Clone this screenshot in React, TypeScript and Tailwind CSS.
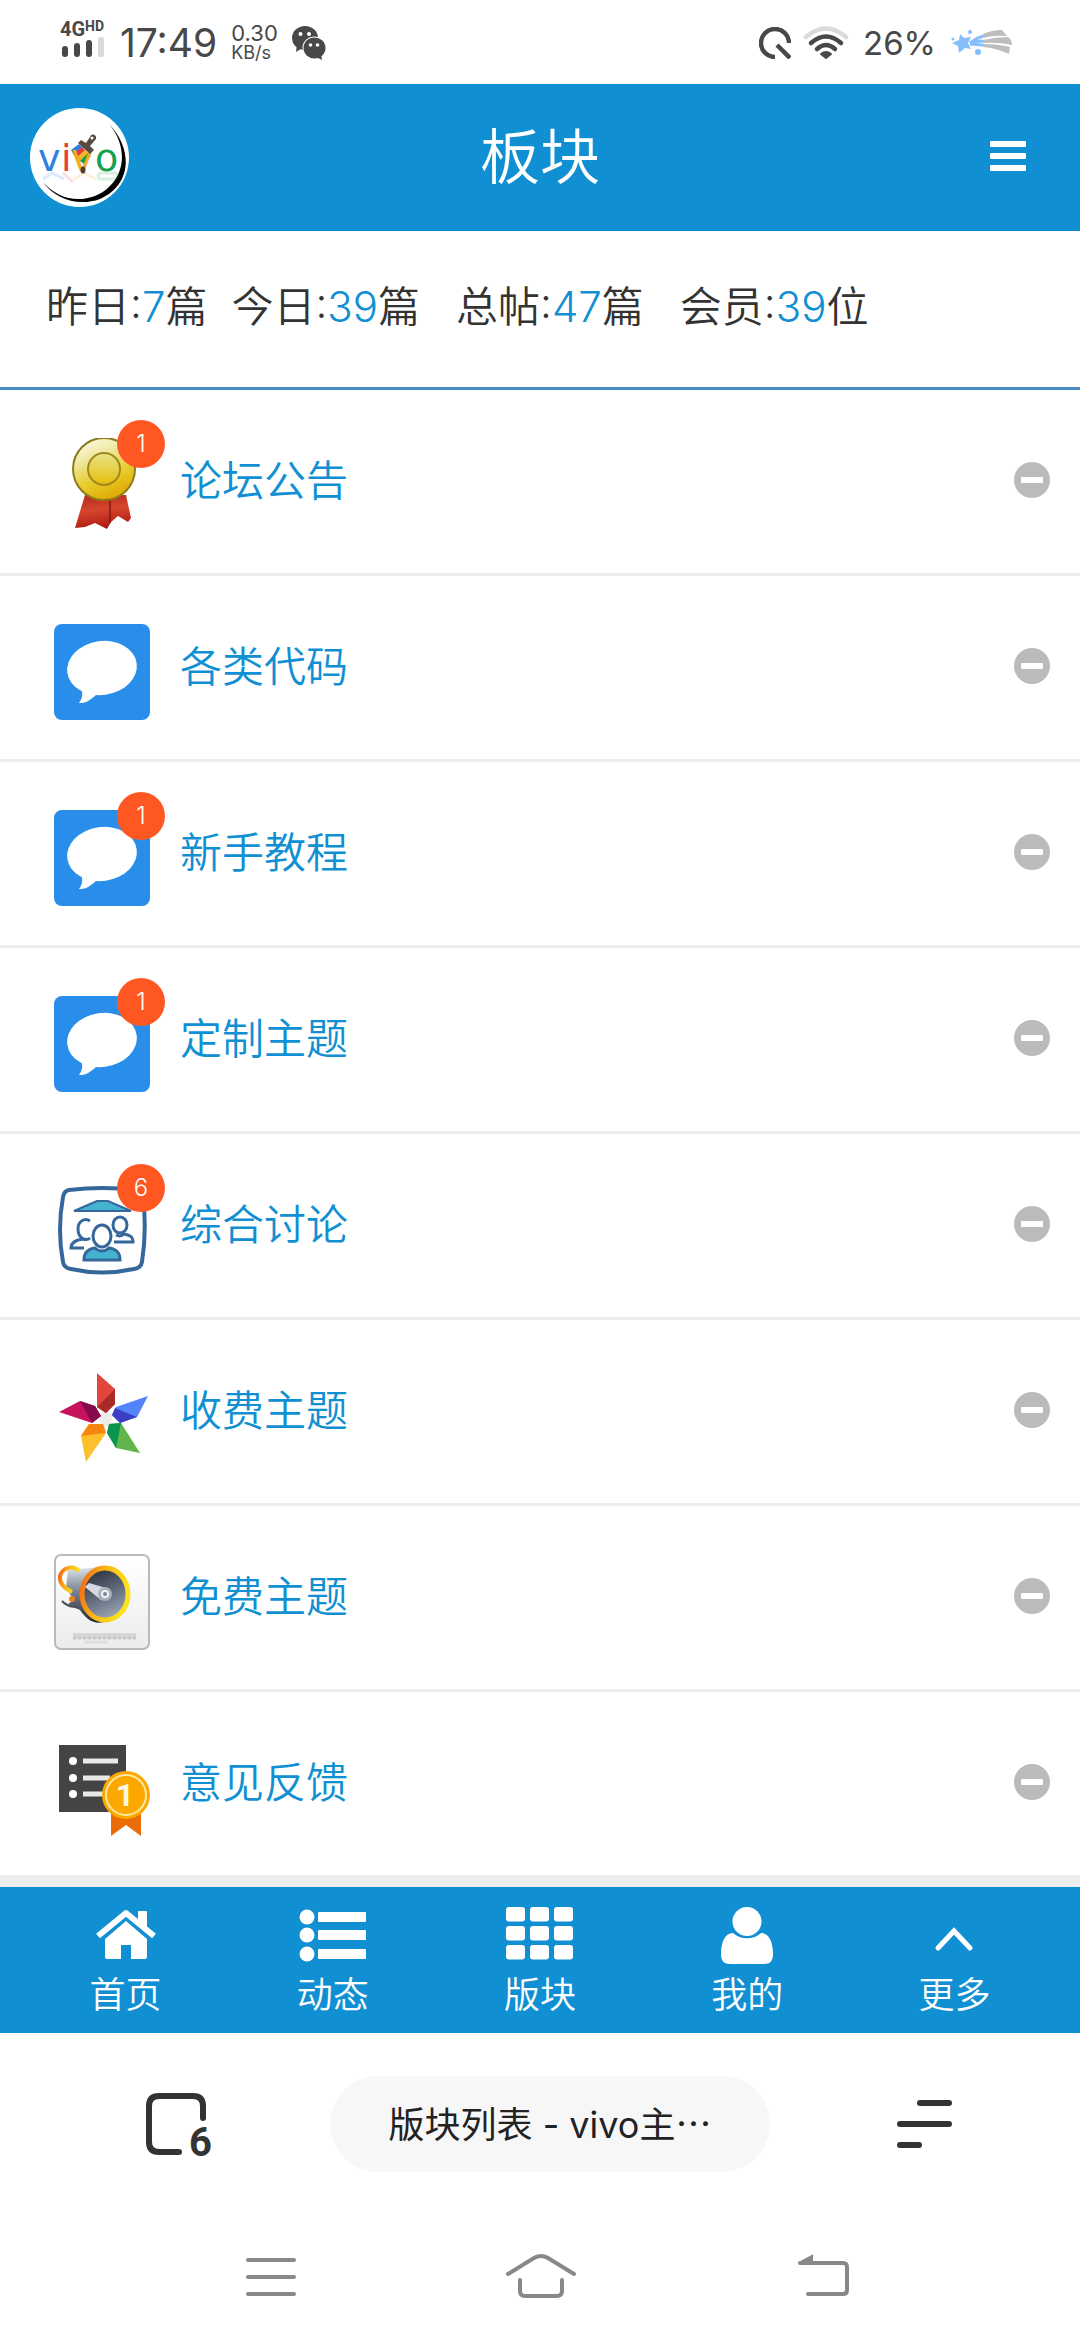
import { useState } from "react"
import type { ReactNode } from "react"

function MedalIcon() {
  return (
    <svg viewBox="0 0 96 96" className="h-24 w-24" aria-hidden="true">
      <defs>
        <linearGradient id="medal-gold" x1="0.2" y1="0" x2="0.6" y2="1">
          <stop offset="0" stopColor="#fbfae8" />
          <stop offset="0.3" stopColor="#efe9a0" />
          <stop offset="0.65" stopColor="#e8cc2c" />
          <stop offset="1" stopColor="#dfa800" />
        </linearGradient>
        <linearGradient id="medal-core" x1="0" y1="0" x2="0" y2="1">
          <stop offset="0" stopColor="#e9e48a" />
          <stop offset="1" stopColor="#e6bd08" />
        </linearGradient>
        <linearGradient id="medal-ribbon" x1="0" y1="0" x2="0.2" y2="1">
          <stop offset="0" stopColor="#b5281c" />
          <stop offset="0.5" stopColor="#d5462c" />
          <stop offset="1" stopColor="#b01c14" />
        </linearGradient>
      </defs>
      <path d="M31 57 L21 90 L31 89 L41 85 L53 91 L57 84 L64 78 L74 84 L77 80 L72 57 Z" fill="url(#medal-ribbon)" />
      <path d="M56 60 L56 85" stroke="#9a1a14" strokeWidth="2" />
      <circle cx="50" cy="31" r="31" fill="url(#medal-gold)" stroke="#8c7a1c" strokeWidth="2" />
      <circle cx="50" cy="31" r="16" fill="url(#medal-core)" stroke="#a08a1e" strokeWidth="2" />
    </svg>
  )
}

function ChatIcon() {
  return (
    <svg viewBox="0 0 96 96" className="h-24 w-24" aria-hidden="true">
      <rect width="96" height="96" rx="8" fill="#298ee9" />
      <ellipse cx="48" cy="44" rx="35" ry="27" transform="rotate(-8 48 44)" fill="#fff" />
      <path d="M24 62 C29 66 30 72 25 79 C33 80 38 74 42 71 L50 70 Z" fill="#fff" />
    </svg>
  )
}

function ForumIcon() {
  return (
    <svg viewBox="0 0 96 96" className="h-24 w-24" fill="none" stroke="#36679b" strokeWidth="3" aria-hidden="true">
      <path
        d="M15 8 Q48 4 82 8 Q88 9 89 15 Q93 48 88 80 Q87 86 80 87 Q48 94 17 87 Q10 86 9 80 Q3 48 9 15 Q10 9 15 8 Z"
        strokeWidth="4"
      />
      <path d="M20 29 L43 19 H54 L77 29 Z" fill="#43b3cf" strokeWidth="2" />
      <path d="M36 39 C30 35 24 40 24 47 C24 52 26 55 29 57 C22 58 17 61 17 66 H30" />
      <path d="M29 57 C32 58 34 58 36 56" />
      <ellipse cx="66" cy="43" rx="7" ry="8" />
      <path d="M60 60 H79 C79 54 75 53 70 52 C67 55 64 54 62 53" />
      <ellipse cx="48" cy="54" rx="9" ry="11" fill="#fff" />
      <path d="M30 78 C30 70 34 67 41 66 C45 70 51 70 55 66 C62 67 66 70 66 78 Z" fill="#43b3cf" />
    </svg>
  )
}

function PinwheelIcon() {
  return (
    <svg viewBox="0 0 96 96" className="h-24 w-24" aria-hidden="true">
      <path d="M52 42 L60 47 L56 57 L50 60 L45 54 L47 46 Z" fill="#ececec" />
      <path d="M43 5 L61 21 V36 L52 45 L43 39 Z" fill="#e0463b" />
      <path d="M61 21 V36 L52 45 L43 39 Z" fill="#a92a26" />
      <path d="M94 28 L83 49 L66 55 L58 47 L62 39 Z" fill="#5384fb" />
      <path d="M83 49 L66 55 L58 47 L61 40 Z" fill="#3a3fc4" />
      <path d="M86 85 L62 80 L53 65 L55 56 L67 55 Z" fill="#62b54a" />
      <path d="M62 80 L53 65 L55 56 L67 55 Z" fill="#0b9350" />
      <path d="M32 94 L27 68 L35 56 H49 L52 65 Z" fill="#fdc02a" />
      <path d="M27 68 L35 56 H49 L52 65 Z" fill="#f6860f" />
      <path d="M5 44 L26 33 L41 38 L47 48 L38 55 Z" fill="#c8125f" />
      <path d="M26 33 L41 38 L47 48 L38 55 Z" fill="#850b4b" />
    </svg>
  )
}

function SpeakerIcon() {
  return (
    <svg viewBox="0 0 96 96" className="h-24 w-24" aria-hidden="true">
      <defs>
        <linearGradient id="speaker-plate" x1="0" y1="0" x2="0" y2="1">
          <stop offset="0" stopColor="#ffffff" />
          <stop offset="1" stopColor="#ebecee" />
        </linearGradient>
        <linearGradient id="speaker-ring" x1="0" y1="0" x2="1" y2="0.3">
          <stop offset="0" stopColor="#f0641a" />
          <stop offset="0.45" stopColor="#f9b414" />
          <stop offset="1" stopColor="#fbe21e" />
        </linearGradient>
        <linearGradient id="speaker-cone" x1="0.3" y1="0" x2="0.7" y2="1">
          <stop offset="0" stopColor="#2b3039" />
          <stop offset="0.5" stopColor="#616b7c" />
          <stop offset="1" stopColor="#a3abb8" />
        </linearGradient>
        <linearGradient id="speaker-tube" x1="0" y1="0" x2="0" y2="1">
          <stop offset="0" stopColor="#dfe3ea" />
          <stop offset="0.45" stopColor="#76808f" />
          <stop offset="1" stopColor="#23272e" />
        </linearGradient>
      </defs>
      <rect x="1" y="1" width="94" height="94" rx="6" fill="url(#speaker-plate)" stroke="#b9b9b9" strokeWidth="2" />
      <path d="M14 16 L46 13 L50 68 C40 71 32 65 26 56 L14 50 L20 46 L12 34 Z" fill="url(#speaker-tube)" />
      <path d="M8 47 C14 54 20 52 24 54" fill="none" stroke="#4a4f58" strokeWidth="2" />
      <path d="M25 17 C19 11 9 13 6 22 C5 29 10 34 18 38" fill="none" stroke="url(#speaker-ring)" strokeWidth="4" />
      <circle cx="18" cy="45" r="3" fill="#f0801c" />
      <ellipse cx="51" cy="40" rx="23" ry="26" fill="url(#speaker-cone)" stroke="url(#speaker-ring)" strokeWidth="5" />
      <path d="M31 33 L35 29 L52 34 L54 45 L47 46 Z" fill="#d5d9e0" />
      <circle cx="51" cy="40" r="7" fill="#aab1bd" />
      <circle cx="51" cy="40" r="4" fill="#eef0f3" />
      <circle cx="51" cy="40" r="2" fill="#7d8694" />
      <path d="M19 82 H82" stroke="#d6d7d9" strokeWidth="6" />
      <path d="M19 84 H82" stroke="#c6c7c9" strokeWidth="3" strokeDasharray="3 2" />
      <path d="M30 88 H54" stroke="#dddee0" strokeWidth="3" />
    </svg>
  )
}

function FeedbackIcon() {
  return (
    <svg viewBox="0 0 96 96" className="h-24 w-24" aria-hidden="true">
      <rect x="5" y="5" width="67" height="67" fill="#444" />
      <g fill="#fff">
        <circle cx="19" cy="21" r="4" />
        <circle cx="19" cy="38" r="4" />
        <circle cx="19" cy="54" r="4" />
      </g>
      <path d="M29 21 H64 M29 38 H56 M29 54 H50" stroke="#e9e9e9" strokeWidth="5" />
      <path d="M57 72 H87 V96 L72 85 L57 96 Z" fill="#ea6c06" />
      <circle cx="72" cy="55" r="24" fill="#fca800" />
      <circle cx="72" cy="55" r="20" fill="none" stroke="#ffe9a6" strokeWidth="2" />
      <text x="71" y="66" textAnchor="middle" fontSize="32" fontWeight="700" fontFamily="Roboto, sans-serif" fill="#fff8df">
        1
      </text>
    </svg>
  )
}

function SiteLogo() {
  return (
    <svg viewBox="0 0 99 99" className="size-[99px]" role="img" aria-label="vivo">
      <circle cx="49.5" cy="49.5" r="49.5" fill="#fff" />
      <path d="M79 16 C104 42 101 78 70 91 C48 99 25 91 13 74 C27 90 46 95 65 88 C94 76 101 42 79 16 Z" fill="#000" />
      {/* mirrored tint under the word */}
      <g fill="none" strokeWidth="3" opacity="0.16">
        <path d="M13 71 L22 65 L34 71" stroke="#2f7fe0" />
        <path d="M33 65 L43 74" stroke="#e53d38" />
        <path d="M44 71 L54 65 L66 71" stroke="#f4a91f" />
        <rect x="68" y="65" width="20" height="6" rx="3" stroke="#14a050" />
      </g>
      {/* brush bristles sit behind the second v */}
      <path d="M49 36 L41 42 L44 47 L53 40 Z" fill="#2f7fe0" />
      <path d="M52 39 L43 46 L47 51 L56 43 Z" fill="#e53d38" />
      <path d="M55 42 L46 50 L50 54 L59 46 Z" fill="#f4b32a" />
      <path d="M58 45 L50 53 L54 56 L61 48 Z" fill="#14a050" />
      <g fontFamily="'DejaVu Sans', sans-serif" fontSize="38">
        <text x="8" y="63" fill="#2f7fe0">v</text>
        <text x="31" y="63" fill="#e53d38">i</text>
        <text x="41" y="63" fill="#f4a91f">v</text>
        <text x="65" y="63" fill="#14a050">o</text>
      </g>
      <path
        d="M48 35 L51 32 L56 35 L60 29 C61 25 67 26 66 31 L60 38 L64 42 L60 46 Z"
        fill="#594a42"
      />
      <circle cx="62" cy="30" r="1.5" fill="#fff" />
      <ellipse cx="53" cy="62" rx="2.5" ry="3.5" fill="#4a4038" />
    </svg>
  )
}

type Board = {
  title: string
  icon: ReactNode
  count?: number
}

const boards: Board[] = [
  { title: "论坛公告", icon: <MedalIcon />, count: 1 },
  { title: "各类代码", icon: <ChatIcon /> },
  { title: "新手教程", icon: <ChatIcon />, count: 1 },
  { title: "定制主题", icon: <ChatIcon />, count: 1 },
  { title: "综合讨论", icon: <ForumIcon />, count: 6 },
  { title: "收费主题", icon: <PinwheelIcon /> },
  { title: "免费主题", icon: <SpeakerIcon /> },
  { title: "意见反馈", icon: <FeedbackIcon /> },
]

const tabs = [
  {
    label: "首页",
    icon: (
      <>
        <path d="M6 29 L34 6 L62 29" fill="none" stroke="#fff" strokeWidth="6" strokeLinejoin="round" />
        <path d="M46 5 Q46 4 47 4 H54 Q55 4 55 5 V24 L46 17 Z" />
        <path d="M34 14 L55 32 V50 Q55 52 53 52 H39 V38 H29 V52 H15 Q13 52 13 50 V32 Z" />
      </>
    ),
  },
  {
    label: "动态",
    icon: (
      <>
        <circle cx="8" cy="10" r="7.5" />
        <circle cx="8" cy="28" r="7.5" />
        <circle cx="8" cy="47" r="7.5" />
        <rect x="19" y="5" width="48" height="10" rx="1" />
        <rect x="19" y="23" width="48" height="10" rx="1" />
        <rect x="19" y="42" width="48" height="10" rx="1" />
      </>
    ),
  },
  {
    label: "版块",
    icon: (
      <>
        {[0, 19, 38].map((y) =>
          [0, 24, 48].map((x) => <rect key={`${x}-${y}`} x={x} y={y} width="19" height="14.5" rx="3" />),
        )}
      </>
    ),
  },
  {
    label: "我的",
    icon: (
      <>
        <circle cx="34" cy="14.5" r="14.5" />
        <path d="M20 26 C27 33 41 33 48 26 C56 26 60 35 60 47 C60 54 57 57 51 57 H17 C11 57 8 54 8 47 C8 35 12 26 20 26 Z" />
      </>
    ),
  },
  {
    label: "更多",
    icon: <path d="M18 41 L34 24 L50 41" fill="none" stroke="#fff" strokeWidth="5" strokeLinecap="round" />,
  },
]

function StatusBar() {
  return (
    <div className="flex h-[84px] items-center justify-between pt-[2px] pr-[66px] pl-[60px] text-[#484848]">
      <div className="flex items-center">
        <div className="flex w-12 flex-col pb-2">
          <div className="flex items-start font-[Roboto,sans-serif] font-bold">
            <span className="text-[20px] leading-[16px]">4G</span>
            <span className="text-[14px] leading-[10px]">HD</span>
          </div>
          <svg viewBox="0 0 48 20" className="h-5 w-12" aria-hidden="true">
            <rect x="2" y="9" width="6" height="11" rx="3" fill="#484848" />
            <rect x="14" y="6" width="6" height="14" rx="3" fill="#484848" />
            <rect x="26" y="3" width="6" height="17" rx="3" fill="#484848" />
            <rect x="38" y="0" width="6" height="20" rx="2" fill="#dadada" />
          </svg>
        </div>
        <span className="ml-3 text-[39px] leading-[48px]">17:49</span>
        <span className="ml-[14px] flex flex-col">
          <span className="text-[22px] leading-[20px]">0.30</span>
          <span className="text-[18px] leading-[20px]">KB/s</span>
        </span>
        <svg viewBox="0 0 34 34" className="ml-[14px] size-[34px]" fill="#484848" aria-hidden="true">
          <path d="M5 18 L4 26 L10 22 Z" />
          <ellipse cx="13" cy="12" rx="13" ry="12" />
          <ellipse cx="22.5" cy="22" rx="12" ry="11.5" fill="#fff" />
          <ellipse cx="22.5" cy="22" rx="11" ry="10.5" />
          <path d="M24 31 L30 34 L29 28 Z" />
          <g fill="#fff">
            <circle cx="8.5" cy="8" r="2" />
            <circle cx="17" cy="8" r="2" />
            <circle cx="18.5" cy="19" r="1.8" />
            <circle cx="25.5" cy="19" r="1.8" />
          </g>
        </svg>
      </div>
      <div className="flex items-center">
        <svg viewBox="0 0 32 32" className="size-8" fill="none" stroke="#484848" strokeWidth="4.5" aria-hidden="true">
          <path d="M30 16 A14 14 0 1 0 16 30" />
          <path d="M18 18 L31 31" />
        </svg>
        <svg viewBox="0 0 46 34" className="ml-3 h-[34px] w-[46px]" fill="none" stroke="#484848" strokeWidth="4.5" strokeLinecap="round" aria-hidden="true">
          <path d="M3 11 Q23 -6 43 11" stroke="#dadada" />
          <path d="M8 17 Q23 4 38 17" />
          <path d="M14 23 Q23 15 32 23" />
          <path d="M18 28 Q23 24 28 28 L23 32 Z" fill="#484848" strokeWidth="2" strokeLinejoin="round" />
        </svg>
        <span className="ml-[14px] text-[33px] leading-[48px]">26%</span>
        <svg viewBox="0 0 64 28" className="ml-[14px] h-7 w-16" aria-hidden="true">
          <g fill="#bdbdbd">
            <path d="M33 5 Q42 1 52 1 L57 7 Q44 6 33 9 Z" />
            <path d="M33 11 Q46 8 58 8 Q62 11 62 16 Q48 13 33 14 Z" />
            <path d="M33 15 Q48 15 60 18 L59 25 Q46 19 33 18 Z" />
          </g>
          <g fill="none" stroke="#86bdfc" strokeWidth="3">
            <path d="M20 14 Q26 9 33 7" />
            <path d="M20 14 Q26 12 33 12" />
            <path d="M20 15 L33 16" />
          </g>
          <path d="M10 5 L14 9 L21 8 L18 14 L21 20 L15 19 L9 24 L8 17 L2 14 L9 11 Z" fill="#86bdfc" />
          <circle cx="20" cy="3" r="2" fill="#86bdfc" />
          <circle cx="28" cy="23" r="3" fill="#86bdfc" />
          <circle cx="3" cy="10" r="1.5" fill="#86bdfc" />
        </svg>
      </div>
    </div>
  )
}

function Stat({ label, value, unit }: { label: string; value: number; unit: string }) {
  return (
    <span>
      {label}:<span className="text-[#1090d3]">{value}</span>
      {unit}
    </span>
  )
}

function BoardRow({ board }: { board: Board }) {
  const [open, setOpen] = useState(true)

  return (
    <li className="flex items-center justify-between border-b-[3px] border-[#eee] bg-white py-[39px] pr-[30px] pl-[54px]">
      <a href="#" className="flex items-center gap-[30px]">
        <span className="relative pt-[9px]">
          {board.icon}
          {board.count && (
            <span className="absolute -top-[9px] left-[63px] flex size-12 items-center justify-center rounded-full bg-[#ff5722] text-[24px] text-white">
              {board.count}
            </span>
          )}
        </span>
        <span className="pb-[2px] text-[42px] leading-[60px] text-[#1090d3]">{board.title}</span>
      </a>
      <button
        type="button"
        aria-label={board.title}
        aria-expanded={open}
        onClick={() => setOpen(!open)}
        className="mb-1 flex size-9 items-center justify-center rounded-full bg-[#bbb]"
      >
        <span className="h-[6px] w-[22px] rounded-[1px] bg-white" />
      </button>
    </li>
  )
}

export default function App() {
  return (
    <div
      lang="zh-CN"
      className="flex min-h-screen flex-col bg-white font-[Inter,'Noto_Sans_CJK_SC',sans-serif] font-normal"
    >
      <StatusBar />

      {/* Header */}
      <header className="grid grid-cols-3 items-center bg-[#1090d3] py-6 pr-[54px] pl-[30px] text-white">
        <a href="#">
          <SiteLogo />
        </a>
        <h1 className="pb-[2px] pl-6 text-center text-[60px] leading-[72px] font-[350]">板块</h1>
        <button type="button" aria-label="菜单" className="mb-1 flex w-9 flex-col gap-[6px] justify-self-end">
          <span className="h-[6px] w-full rounded-[1px] bg-white" />
          <span className="h-[6px] w-full rounded-[1px] bg-white" />
          <span className="h-[6px] w-full rounded-[1px] bg-white" />
        </button>
      </header>

      <main className="flex-1 bg-[#eee] font-[350]">
        {/* Forum totals */}
        <div className="flex border-b-[3px] border-[#4a8bc4] bg-white px-[46px] pt-[46px] pb-[50px] text-[42px] leading-[60px] text-[#333]">
          <div className="mr-6">
            <Stat label="昨日" value={7} unit="篇" />
          </div>
          <div className="flex gap-9">
            <Stat label="今日" value={39} unit="篇" />
            <Stat label="总帖" value={47} unit="篇" />
            <Stat label="会员" value={39} unit="位" />
          </div>
        </div>

        <ul>
          {boards.map((board) => (
            <BoardRow key={board.title} board={board} />
          ))}
        </ul>
      </main>

      {/* Site tabs */}
      <nav className="grid grid-cols-5 bg-[#1090d3] px-[22px] pt-5 pb-[14px] font-[350] text-white">
        {tabs.map((tab) => (
          <a key={tab.label} href="#" className="flex flex-col items-center gap-[6px]">
            <svg viewBox="0 0 68 58" className="h-[58px] w-[68px]" fill="#fff" aria-hidden="true">
              {tab.icon}
            </svg>
            <span className="text-[36px] leading-[48px]">{tab.label}</span>
          </a>
        ))}
      </nav>

      {/* Browser toolbar */}
      <div className="flex h-[181px] items-center pr-[126px] pl-[146px] text-[#333]">
        <button type="button" aria-label="标签页" className="relative">
          <svg viewBox="0 0 66 62" className="h-[62px] w-[66px]" fill="none" stroke="#333" strokeWidth="6" strokeLinecap="round" aria-hidden="true">
            <path d="M57 25 V13 Q57 3 47 3 H13 Q3 3 3 13 V49 Q3 59 13 59 H33" />
          </svg>
          <span className="absolute right-0 -bottom-2 font-[Roboto,sans-serif] text-[40px] leading-[40px] font-bold">6</span>
        </button>
        <button type="button" className="mr-[126px] ml-[118px] h-24 flex-1 rounded-full bg-[#f7f7f7] text-[36px] text-[#222]">
          版块列表 - vivo主<span className="font-['Noto_Sans_CJK_SC',sans-serif]">…</span>
        </button>
        <button type="button" aria-label="工具">
          <svg viewBox="0 0 58 48" className="h-12 w-[58px]" stroke="#333" strokeWidth="6" strokeLinecap="round" aria-hidden="true">
            <path d="M24 3 H53 M4 24 H53 M4 45 H23" />
          </svg>
        </button>
      </div>

      {/* System keys */}
      <div className="flex h-[126px] items-center justify-between px-[230px]">
        <button type="button" aria-label="最近任务">
          <svg viewBox="0 0 80 48" className="h-12 w-20" stroke="#888" strokeWidth="4" strokeLinecap="round" aria-hidden="true">
            <path d="M18 7 H64 M18 24 H64 M18 41 H64" />
          </svg>
        </button>
        <button type="button" aria-label="主屏幕">
          <svg viewBox="0 0 80 48" className="h-12 w-20" fill="none" stroke="#888" strokeWidth="4" strokeLinecap="round" aria-hidden="true">
            <path d="M8 21 L34 5 Q41 1 48 5 L74 21" />
            <path d="M20 27 V38 Q20 43 25 43 H57 Q62 43 62 38 V27" />
          </svg>
        </button>
        <button type="button" aria-label="返回">
          <svg viewBox="0 0 80 48" className="h-12 w-20" fill="none" stroke="#888" strokeWidth="4" strokeLinecap="round" aria-hidden="true">
            <path d="M30 10 H73 Q77 10 77 14 V37 Q77 41 73 41 H38" />
            <path d="M29 10 L42 3 V10 Z" fill="#888" strokeWidth="2" />
          </svg>
        </button>
      </div>
    </div>
  )
}
